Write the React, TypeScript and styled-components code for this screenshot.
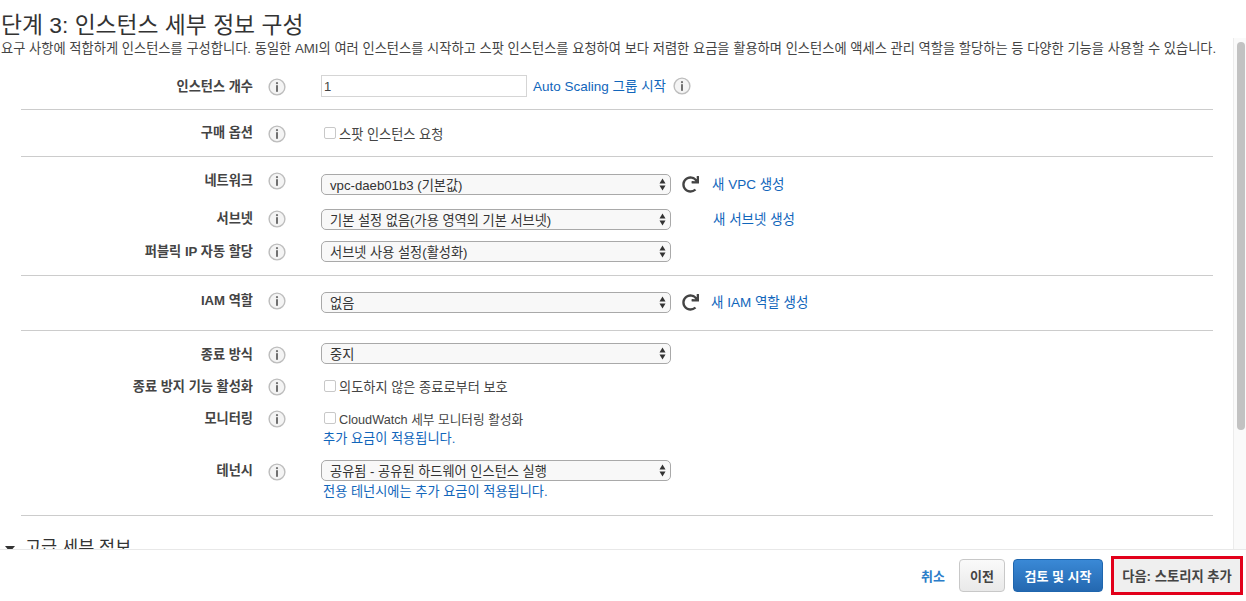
import type { ReactNode } from 'react';
import styled, { createGlobalStyle } from 'styled-components';
import { FaRedo } from 'react-icons/fa';

const GlobalStyle = createGlobalStyle`
  html, body {
    margin: 0;
    padding: 0;
    background: #fff;
    font-family: "Liberation Sans", "Noto Sans CJK KR", sans-serif;
    color: #444;
  }
`;

const Page = styled.div`
  width: 1246px;
  height: 601px;
  display: flex;
  flex-direction: column;
  overflow: hidden;
`;

const Title = styled.h1`
  height: 38px;
  flex-shrink: 0;
  margin: 0;
  padding: 12px 0 0 1px;
  box-sizing: border-box;
  font-size: 22.8px;
  line-height: 26px;
  font-weight: 400;
  color: #333;
`;

const Body = styled.div`
  flex: 1;
  min-height: 0;
  display: flex;
`;

const ScrollArea = styled.div`
  flex: 1;
  min-width: 0;
  overflow: hidden;
`;

const Description = styled.p`
  margin: 0;
  padding: 3px 0 0 1px;
  height: 26px;
  box-sizing: border-box;
  font-size: 13.25px;
  line-height: 16px;
  color: #444;
  white-space: nowrap;
`;

const ScrollTrack = styled.div`
  width: 13px;
  flex-shrink: 0;
  box-sizing: border-box;
  padding: 4px 1px 0 3px;
  background: #fafafa;
  border-left: 1px solid #ececec;
`;

const ScrollThumb = styled.div`
  height: 388px;
  border-radius: 5px;
  background: #c2c2c2;
`;

const Section = styled.section<{ $top: number }>`
  margin: 0 20px 0 21px;
  padding-top: ${({ $top }) => $top}px;
  border-bottom: 1px solid #ccc;
`;

const Row = styled.div<{ $height: number }>`
  display: grid;
  grid-template-columns: 232px 68px 1fr;
  height: ${({ $height }) => $height}px;
`;

const Label = styled.div<{ $top: number }>`
  padding-top: ${({ $top }) => $top}px;
  font-size: 13.2px;
  line-height: 18px;
  font-weight: 700;
  color: #444;
  text-align: right;
  white-space: nowrap;
`;

const InfoCell = styled.div<{ $top: number }>`
  padding: ${({ $top }) => $top}px 0 0 15px;
`;

const InlineInfo = styled.span`
  display: flex;
  margin-left: 7px;
`;

const Control = styled.div<{ $top?: number }>`
  padding-top: ${({ $top }) => $top ?? 0}px;
  display: flex;
  flex-direction: column;
  align-items: flex-start;
`;

const ControlLine = styled.div`
  display: flex;
  align-items: center;
  height: 22px;
`;

const CountInput = styled.input`
  width: 206px;
  height: 22px;
  box-sizing: border-box;
  border: 1px solid #d5d5d5;
  padding: 0 2px;
  font: 13px "Liberation Sans", sans-serif;
  color: #444;
  outline: none;
`;

const SelectBox = styled.div`
  width: 350px;
  height: 21px;
  box-sizing: border-box;
  border: 1px solid #a9a9a9;
  border-radius: 5px;
  background: #f8f8f8;
  padding: 0 4px 0 8px;
  display: flex;
  align-items: center;
  justify-content: space-between;
  font-size: 13.2px;
  color: #333;
  white-space: nowrap;
`;

const CheckLine = styled.label<{ $size?: number }>`
  display: flex;
  align-items: center;
  height: 22px;
  padding-left: 3px;
  font-size: ${({ $size }) => $size ?? 13.2}px;
  color: #444;
  white-space: nowrap;
`;

const CheckBox = styled.span`
  width: 10px;
  height: 10px;
  margin-right: 3px;
  border: 1px solid #c8c8c8;
  border-radius: 2px;
  background: #fff;
`;

const TextLink = styled.a<{ $left?: number }>`
  margin: 0 0 2px ${({ $left }) => $left ?? 0}px;
  font-size: 13.5px;
  color: #1166bb;
  white-space: nowrap;
`;

const NoteLink = styled.a<{ $top: number }>`
  margin-top: ${({ $top }) => $top}px;
  padding-left: 2px;
  font-size: 13.2px;
  line-height: 18px;
  color: #1166bb;
  white-space: nowrap;
`;

const Refresh = styled.span`
  display: flex;
  margin-left: 11px;
  color: #444;
  font-size: 17px;
`;

const Advanced = styled.h2`
  margin: 20px 0 0;
  display: flex;
  align-items: center;
  font-size: 17.5px;
  line-height: 22px;
  font-weight: 400;
  color: #333;
`;

const Caret = styled.span`
  width: 0;
  height: 0;
  margin: 4px 10px 0 5px;
  border-left: 5.5px solid transparent;
  border-right: 5.5px solid transparent;
  border-top: 6px solid #333;
`;

const Footer = styled.footer`
  height: 52px;
  flex-shrink: 0;
  box-sizing: border-box;
  border-top: 1px solid #e8e8e8;
  background: #fff;
  display: flex;
  align-items: center;
  justify-content: flex-end;
  padding: 0 3px 1px 0;
`;

const CancelLink = styled.a`
  margin-right: 14px;
  font-size: 13px;
  font-weight: 700;
  color: #2b7dc9;
`;

const Button = styled.button<{ $primary?: boolean; $width?: number }>`
  width: ${({ $width }) => $width}px;
  height: 33px;
  margin-right: 8px;
  padding: 0;
  border-radius: 4px;
  border: 1px solid ${({ $primary }) => ($primary ? '#1f66ae' : '#c8c8c8')};
  background: ${({ $primary }) =>
    $primary ? 'linear-gradient(#3a89d6, #2468b0)' : 'linear-gradient(#fafafa, #e9e9e9)'};
  color: ${({ $primary }) => ($primary ? '#fff' : '#444')};
  font: 700 13px "Liberation Sans", "Noto Sans CJK KR", sans-serif;
  white-space: nowrap;
`;

const NextButton = styled(Button)`
  height: 39px;
  width: 132px;
  margin-right: 0;
  border-radius: 0;
  border: 3px solid #e2001a;
  background: #efefef;
  font-size: 13.3px;
`;

function InfoIcon() {
  return (
    <svg width="18" height="18" viewBox="0 0 18 18">
      <circle cx="9" cy="9" r="7.9" fill="#f4f4f4" stroke="#bdbdbd" strokeWidth="1.4" />
      <circle cx="9" cy="5.2" r="1.1" fill="#707070" />
      <rect x="8" y="7.2" width="2" height="6.6" fill="#707070" />
    </svg>
  );
}

function SelectArrows() {
  return (
    <svg width="7" height="13" viewBox="0 0 7 13">
      <path d="M3.5 0.5 L6.5 5.5 H0.5 Z" fill="#333" />
      <path d="M3.5 12.5 L0.5 7.5 H6.5 Z" fill="#333" />
    </svg>
  );
}

function Select({ value }: { value: string }) {
  return (
    <SelectBox>
      <span>{value}</span>
      <SelectArrows />
    </SelectBox>
  );
}

interface FieldProps {
  label: string;
  height: number;
  labelTop: number;
  infoTop: number;
  controlTop?: number;
  children: ReactNode;
}

function Field({ label, height, labelTop, infoTop, controlTop, children }: FieldProps) {
  return (
    <Row $height={height}>
      <Label $top={labelTop}>{label}</Label>
      <InfoCell $top={infoTop}>
        <InfoIcon />
      </InfoCell>
      <Control $top={controlTop}>{children}</Control>
    </Row>
  );
}

export default function App() {
  return (
    <Page>
      <GlobalStyle />
      <Title>단계 3: 인스턴스 세부 정보 구성</Title>
      <Body>
        <ScrollArea>
          <Description>
            요구 사항에 적합하게 인스턴스를 구성합니다. 동일한 AMI의 여러 인스턴스를 시작하고 스팟 인스턴스를 요청하여 보다 저렴한 요금을 활용하며 인스턴스에 액세스 관리 역할을 할당하는 등 다양한 기능을 사용할 수 있습니다.
          </Description>
          <Section $top={11}>
            <Field label="인스턴스 개수" height={34} labelTop={3} infoTop={3}>
              <ControlLine>
                <CountInput defaultValue="1" />
                <TextLink $left={6}>Auto Scaling 그룹 시작</TextLink>
                <InlineInfo>
                  <InfoIcon />
                </InlineInfo>
              </ControlLine>
            </Field>
          </Section>
          <Section $top={12}>
            <Field label="구매 옵션" height={34} labelTop={2} infoTop={3}>
              <CheckLine>
                <CheckBox />
                스팟 인스턴스 요청
              </CheckLine>
            </Field>
          </Section>
          <Section $top={15}>
            <Field label="네트워크" height={36} labelTop={0} infoTop={0} controlTop={1}>
              <ControlLine>
                <Select value="vpc-daeb01b3 (기본값)" />
                <Refresh>
                  <FaRedo />
                </Refresh>
                <TextLink $left={13}>새 VPC 생성</TextLink>
              </ControlLine>
            </Field>
            <Field label="서브넷" height={32} labelTop={2} infoTop={2}>
              <ControlLine>
                <Select value="기본 설정 없음(가용 영역의 기본 서브넷)" />
                <TextLink $left={42}>새 서브넷 생성</TextLink>
              </ControlLine>
            </Field>
            <Field label="퍼블릭 IP 자동 할당" height={35} labelTop={3} infoTop={3}>
              <ControlLine>
                <Select value="서브넷 사용 설정(활성화)" />
              </ControlLine>
            </Field>
          </Section>
          <Section $top={15}>
            <Field label="IAM 역할" height={39} labelTop={1} infoTop={1}>
              <ControlLine>
                <Select value="없음" />
                <Refresh>
                  <FaRedo />
                </Refresh>
                <TextLink $left={12}>새 IAM 역할 생성</TextLink>
              </ControlLine>
            </Field>
          </Section>
          <Section $top={11}>
            <Field label="종료 방식" height={33} labelTop={4} infoTop={4}>
              <ControlLine>
                <Select value="중지" />
              </ControlLine>
            </Field>
            <Field label="종료 방지 기능 활성화" height={32} labelTop={3} infoTop={3}>
              <CheckLine>
                <CheckBox />
                의도하지 않은 종료로부터 보호
              </CheckLine>
            </Field>
            <Field label="모니터링" height={52} labelTop={3} infoTop={3}>
              <CheckLine $size={12.7}>
                <CheckBox />
                CloudWatch 세부 모니터링 활성화
              </CheckLine>
              <NoteLink $top={1}>추가 요금이 적용됩니다.</NoteLink>
            </Field>
            <Field label="테넌시" height={56} labelTop={3} infoTop={4}>
              <ControlLine>
                <Select value="공유됨 - 공유된 하드웨어 인스턴스 실행" />
              </ControlLine>
              <NoteLink $top={2}>전용 테넌시에는 추가 요금이 적용됩니다.</NoteLink>
            </Field>
          </Section>
          <Advanced>
            <Caret />
            고급 세부 정보
          </Advanced>
        </ScrollArea>
        <ScrollTrack>
          <ScrollThumb />
        </ScrollTrack>
      </Body>
      <Footer>
        <CancelLink>취소</CancelLink>
        <Button $width={46}>이전</Button>
        <Button $primary $width={90}>검토 및 시작</Button>
        <NextButton>다음: 스토리지 추가</NextButton>
      </Footer>
    </Page>
  );
}
